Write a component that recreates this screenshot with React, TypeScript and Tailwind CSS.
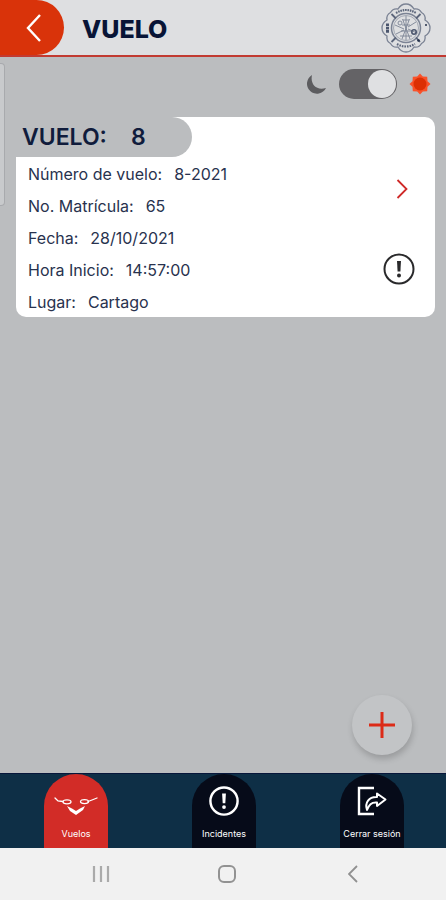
import { useState } from "react";

const flight = {
  id: 8,
  details: [
    { label: "Número de vuelo:", value: "8-2021" },
    { label: "No. Matrícula:", value: "65" },
    { label: "Fecha:", value: "28/10/2021" },
    { label: "Hora Inicio:", value: "14:57:00" },
    { label: "Lugar:", value: "Cartago" },
  ],
};

function Crest() {
  return (
    <svg viewBox="0 0 50 50" className="size-[50px]" fill="none" stroke="#7b8394" strokeWidth="0.9" role="img" aria-label="Bomberos">
      <path d="M9.500 9.500Q12 5 17 6Q20 1 25 1Q30 1 33 6Q38 5 40.500 9.500Q45 12 44 17Q49 20 49 25Q49 30 44 33Q45 38 40.500 40.500Q38 45 33 44Q30 49 25 49Q20 49 17 44Q12 45 9.500 40.500Q5 38 6 33Q1 30 1 25Q1 20 6 17Q5 12 9.500 9.500Z" strokeWidth="1.300" />
      <circle cx="25" cy="25" r="14.5" strokeWidth="1.5" />
      <circle cx="25" cy="25" r="12.5" strokeWidth="0.6" />
      <path d="M25 13V37M21.500 16L29 36M28.500 16L21 36M14 22L23 26M27 26L36 30M15 31L23 27M27 24L35 19M22 17H28M21 22H29M20 28H30M19 33H31" />
      <circle cx="33" cy="29" r="2.2" strokeWidth="1.6" stroke="#4a556d" />
      <circle cx="19" cy="20" r="2" />
      <path d="M15 10Q25 4 35 10" strokeWidth="2.2" strokeDasharray="1.6 0.8" stroke="#5c667b" />
      <path d="M16 41Q25 46 34 41" strokeWidth="2.2" strokeDasharray="1.6 1" stroke="#5c667b" />
      <path d="M6.500 20.500V30" strokeWidth="3" strokeDasharray="2.6 0.7" stroke="#4a556d" />
      <path d="M10.500 11L15 15.500M35 34.500L39 39M35 15.500L39.500 11M10.500 39L15 34.500" strokeWidth="1.8" stroke="#5c667b" />
      <circle cx="45" cy="22" r="1" fill="#243149" stroke="none" />
      <circle cx="37.500" cy="37.500" r="1.3" fill="#243149" stroke="none" />
    </svg>
  );
}

function Alert({ className, ring = 2 }: { className: string; ring?: number }) {
  return (
    <svg viewBox="0 0 32 32" className={className} fill="none" stroke="currentColor" aria-hidden="true">
      <circle cx="16" cy="16" r="14.5" strokeWidth={ring} />
      <path d="M14 8H18L17.400 18.500H14.600Z" fill="currentColor" stroke="none" />
      <circle cx="16" cy="22.5" r="2" fill="currentColor" stroke="none" />
    </svg>
  );
}

function Drone() {
  return (
    <svg viewBox="0 0 44 20" className="h-5 w-11" fill="none" stroke="#fff" strokeWidth="1.3" aria-hidden="true">
      <path d="M1 1L4 4L9 4.500M43 1L38 3L34 4.500" strokeLinecap="round" />
      <ellipse cx="13" cy="4.800" rx="4" ry="2" />
      <ellipse cx="30.500" cy="4.600" rx="4" ry="2" />
      <path d="M13 9L18 11.500L22 14L26 11.500L31 9L29 13L22 18L16 14Z" fill="#fff" stroke="none" />
    </svg>
  );
}

function Exit() {
  return (
    <svg viewBox="0 0 30 30" className="size-[30px]" fill="none" stroke="#fff" strokeWidth="2.4" aria-hidden="true">
      <path d="M17 2H2V28H17" />
      <path d="M20 7.500L28.500 13.500L20 20V16.500C14 16 12 19 10 24C7.500 17 12 10.500 20 11Z" strokeWidth="2" strokeLinejoin="round" />
    </svg>
  );
}

export default function App() {
  const [light, setLight] = useState(true);
  const tab = "flex h-[74px] w-16 flex-col items-center rounded-t-full pt-3 text-[9px] leading-3 text-white";

  return (
    <div className="flex min-h-screen flex-col bg-[#bbbdbf] font-['Inter','Noto_Sans',sans-serif] text-[#101c3c]">
      <header className="flex items-center border-b-2 border-[#c23a31] bg-[#dedfe1] pr-[15px]">
        <button aria-label="Volver" className="flex h-[55px] w-16 items-center justify-center rounded-r-full bg-[#d9330a]">
          <svg viewBox="0 0 16 28" className="ml-1 h-7 w-4" fill="none" stroke="#fff" strokeWidth="2.4" aria-hidden="true">
            <path d="M14 1L2 14L14 27" />
          </svg>
        </button>
        <h1 className="ml-[18px] flex-1 pt-1 text-[25px] font-extrabold text-[#081436]">VUELO</h1>
        <Crest />
      </header>

      <main className="relative flex-1 pr-[11px] pl-4">
        <div className="absolute top-[6px] left-0 h-[143px] w-[5px] rounded-r border border-l-0 border-[#a8aaad] bg-[#c8cacc]" />

        <div className="flex items-center justify-end gap-3 pt-3 pr-1 pb-[18px]">
          <svg viewBox="0 0 20 20" className="size-5" fill="#5c5c5f" aria-hidden="true">
            <path d="M5 1A10 10 0 1 0 19 14C9 17 3 10 5 1Z" />
          </svg>
          <label className="flex h-[30px] w-[58px] cursor-pointer items-center rounded-full bg-[#646366] p-px">
            <input
              type="checkbox"
              aria-label="Modo claro"
              checked={light}
              onChange={() => setLight(!light)}
              className="size-[28px] appearance-none rounded-full bg-[#dfe0e2] checked:ml-auto"
            />
          </label>
          <svg viewBox="0 0 22 22" className="size-[22px]" aria-hidden="true">
            <path d="M11 0.500L13.800 3.500L18.200 3.800L18.500 8.200L21.500 11L18.500 13.800L18.200 18.200L13.800 18.500L11 21.500L8.200 18.500L3.800 18.200L3.500 13.800L0.500 11L3.500 8.200L3.800 3.800L8.200 3.500Z" fill="#f9522a" />
            <circle cx="11" cy="11" r="6.500" fill="#dc3004" />
          </svg>
        </div>

        <article className="rounded-[10px] rounded-tl-none bg-white">
          <h2 className="flex h-10 w-[176px] items-center gap-6 rounded-r-full bg-[#bbbdbf] pl-1.5 text-[23px] font-semibold">
            <span>VUELO:</span>
            <span>{flight.id}</span>
          </h2>
          <div className="flex justify-between">
            <dl className="pl-3 text-base text-[#28324e]">
              {flight.details.map((item) => (
                <div key={item.label} className="flex h-8 items-center gap-3 pt-px">
                  <dt>{item.label}</dt>
                  <dd>{item.value}</dd>
                </div>
              ))}
            </dl>
            <div className="flex flex-col items-center gap-[54px] pt-[22px] pr-5">
              <button aria-label="Ver vuelo" className="ml-1.5">
                <svg viewBox="0 0 12 20" className="h-5 w-3" fill="none" stroke="#cf2928" strokeWidth="1.8" aria-hidden="true">
                  <path d="M1.500 1L10.500 10L1.500 19" />
                </svg>
              </button>
              <button aria-label="Reportar incidente" className="text-[#29292b]">
                <Alert className="size-8" />
              </button>
            </div>
          </div>
        </article>

        <button aria-label="Agregar vuelo" className="absolute right-[34px] bottom-[18px] flex size-[60px] items-center justify-center rounded-full bg-[#c2c4c6] shadow-[1px_4px_6px_rgba(0,0,0,0.18)]">
          <svg viewBox="0 0 26 26" className="size-[26px]" stroke="#dc2b17" strokeWidth="3" aria-hidden="true">
            <path d="M13 0V26M0 13H26" />
          </svg>
        </button>
      </main>

      <nav className="grid grid-cols-3 justify-items-center border-t border-[#07163a] bg-[#0e2f46] pl-0.5">
        <button className={tab + " bg-[#d22c27]"}>
          <span className="flex h-[30px] items-center pt-3"><Drone /></span>
          <span className="mt-3">Vuelos</span>
        </button>
        <button className={tab + " bg-[#060b19]"}>
          <Alert className="size-[30px]" ring={2.6} />
          <span className="mt-3">Incidentes</span>
        </button>
        <button className={tab + " bg-[#060b19]"}>
          <Exit />
          <span className="mt-3 whitespace-nowrap">Cerrar sesión</span>
        </button>
      </nav>

      <div className="grid h-[52px] grid-cols-3 place-items-center bg-[#f1f1f1] pr-[30px] pl-[38px]">
        <button aria-label="Recientes">
          <svg viewBox="0 0 18 18" className="size-[18px]" stroke="#aaaaaa" strokeWidth="2.2" aria-hidden="true">
            <path d="M2 1V17M9 1V17M16 1V17" />
          </svg>
        </button>
        <button aria-label="Inicio" className="size-[18px] rounded-[6px] border-2 border-[#929292]" />
        <button aria-label="Atrás">
          <svg viewBox="0 0 10 18" className="h-[18px] w-2.5" fill="none" stroke="#909090" strokeWidth="1.8" aria-hidden="true">
            <path d="M9 1L1 9L9 17" />
          </svg>
        </button>
      </div>
    </div>
  );
}
